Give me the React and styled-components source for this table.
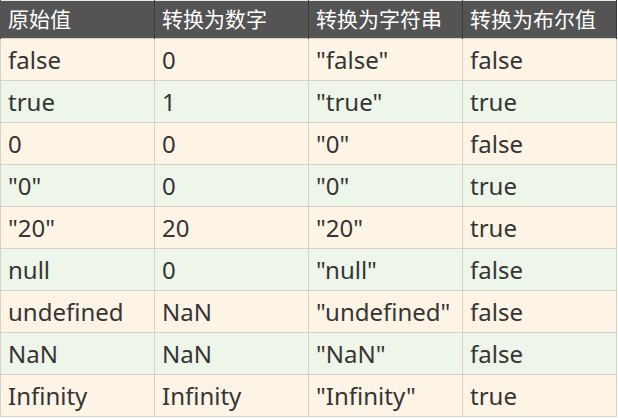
import React from "react";
import styled, { createGlobalStyle } from "styled-components";

const GlobalStyle = createGlobalStyle`
  body {
    margin: 0;
    background: #fff;
    font-family: "Noto Sans", "Noto Sans CJK SC", sans-serif;
  }
`;

const rows = [
  ["false", "0", '"false"', "false"],
  ["true", "1", '"true"', "true"],
  ["0", "0", '"0"', "false"],
  ['"0"', "0", '"0"', "true"],
  ['"20"', "20", '"20"', "true"],
  ["null", "0", '"null"', "false"],
  ["undefined", "NaN", '"undefined"', "false"],
  ["NaN", "NaN", '"NaN"', "false"],
  ["Infinity", "Infinity", '"Infinity"', "true"],
];

const headers = ["原始值", "转换为数字", "转换为字符串", "转换为布尔值"];

export default function App() {
  return (
    <>
      <GlobalStyle />
      <Table>
        <thead>
          <tr>
            {headers.map((h) => (
              <HeadCell key={h}>{h}</HeadCell>
            ))}
          </tr>
        </thead>
        <tbody>
          {rows.map((row, i) => (
            <Row key={i} $alt={i % 2 === 1}>
              {row.map((cell, j) => (
                <Cell key={j}>{cell}</Cell>
              ))}
            </Row>
          ))}
        </tbody>
      </Table>
    </>
  );
}

const Table = styled.table`
  border-collapse: collapse;
  width: 617px;
  table-layout: fixed;
  font-size: 24px;
  border-top: 1px solid #ececec;
`;

const HeadCell = styled.th`
  background: #545454;
  color: #fff;
  font-weight: normal;
  font-size: 21px;
  text-align: left;
  height: 37px;
  padding: 0 7px;
  border-left: 1px solid #545454;
  border-right: 1px solid #3c3c3c;
  line-height: 1;
`;

const Row = styled.tr`
  background: ${(p) => (p.$alt ? "#eef5e9" : "#fef4e6")};
`;

const Cell = styled.td`
  height: 40px;
  padding: 1px 7px 0;
  border: 1px solid #d6d2c8;
  white-space: nowrap;
  line-height: 1;
  color: #353535;
`;
